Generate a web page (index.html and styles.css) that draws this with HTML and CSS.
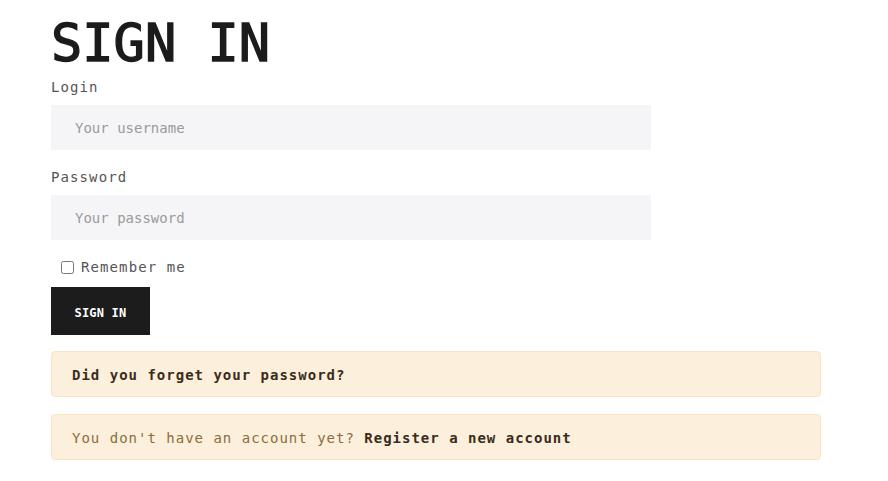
FILE: index.html
```html
<!DOCTYPE html>
<html lang="en">
<head>
<meta charset="utf-8">
<title>Sign in</title>
<link rel="stylesheet" href="styles.css">
</head>
<body>
<main class="page">
  <h1 class="title">SIGN IN</h1>
  <form class="form">
    <label class="label" for="login">Login</label>
    <input class="field" id="login" type="text" placeholder="Your username">
    <label class="label label-gap" for="password">Password</label>
    <input class="field" id="password" type="password" placeholder="Your password">
    <div class="remember">
      <input class="check" id="remember" type="checkbox">
      <label class="remember-text" for="remember">Remember me</label>
    </div>
    <button class="btn" type="button">SIGN IN</button>
  </form>
  <div class="alert alert-first"><a class="alert-link" href="#">Did you forget your password?</a></div>
  <div class="alert alert-second">You don't have an account yet? <a class="alert-link" href="#">Register a new account</a></div>
</main>
</body>
</html>
```

FILE: styles.css
```css
* { box-sizing: border-box; }
html, body { margin: 0; padding: 0; background: #ffffff; }
body { font-family: "DejaVu Sans Mono", "Liberation Mono", monospace; }

.page {
  padding: 17px 0 0 51px;
  width: 821px;
}

.title {
  margin: 0;
  font-size: 52px;
  line-height: 52px;
  font-weight: 400;
  -webkit-text-stroke: 1.4px #1b1b1b;
  color: #1b1b1b;
  letter-spacing: 0;
}

.form {
  display: flex;
  flex-direction: column;
  align-items: flex-start;
  margin-top: 8px;
}

.label {
  display: block;
  font-size: 14px;
  line-height: 20px;
  letter-spacing: 1.1px;
  color: #555555;
  margin-bottom: 8px;
}
.label-gap { margin-top: 17px; }

.field {
  width: 600px;
  height: 45px;
  border: none;
  outline: none;
  background: #f5f5f7;
  padding: 0 24px;
  font-family: "DejaVu Sans Mono", "Liberation Mono", monospace;
  font-size: 14px;
  color: #333;
}
.field::placeholder { color: #9a9a9a; }

.remember {
  display: flex;
  align-items: center;
  margin-top: 17px;
  padding-left: 10px;
  height: 20px;
}
.check {
  width: 13px;
  height: 13px;
  margin: 0 7px 0 0;
}
.remember-text {
  font-size: 14px;
  line-height: 20px;
  letter-spacing: 1.1px;
  color: #555555;
}

.btn {
  margin-top: 10px;
  width: 99px;
  height: 48px;
  border: none;
  background: #1c1c1c;
  color: #ffffff;
  font-family: "DejaVu Sans Mono", "Liberation Mono", monospace;
  font-weight: 700;
  font-size: 12px;
  letter-spacing: 0.2px;
  padding: 3px 0 0 0;
  cursor: pointer;
}

.alert {
  width: 770px;
  background: #fcefdc;
  border: 1px solid #fae4c7;
  border-radius: 4px;
  padding: 13px 20px 11px;
  font-size: 14px;
  line-height: 20px;
  letter-spacing: 1px;
  color: #8a6d3b;
}
.alert-first { margin-top: 16px; }
.alert-second { margin-top: 17px; }
.alert-link {
  color: #3a2c1b;
  font-weight: 700;
  text-decoration: none;
}
```
